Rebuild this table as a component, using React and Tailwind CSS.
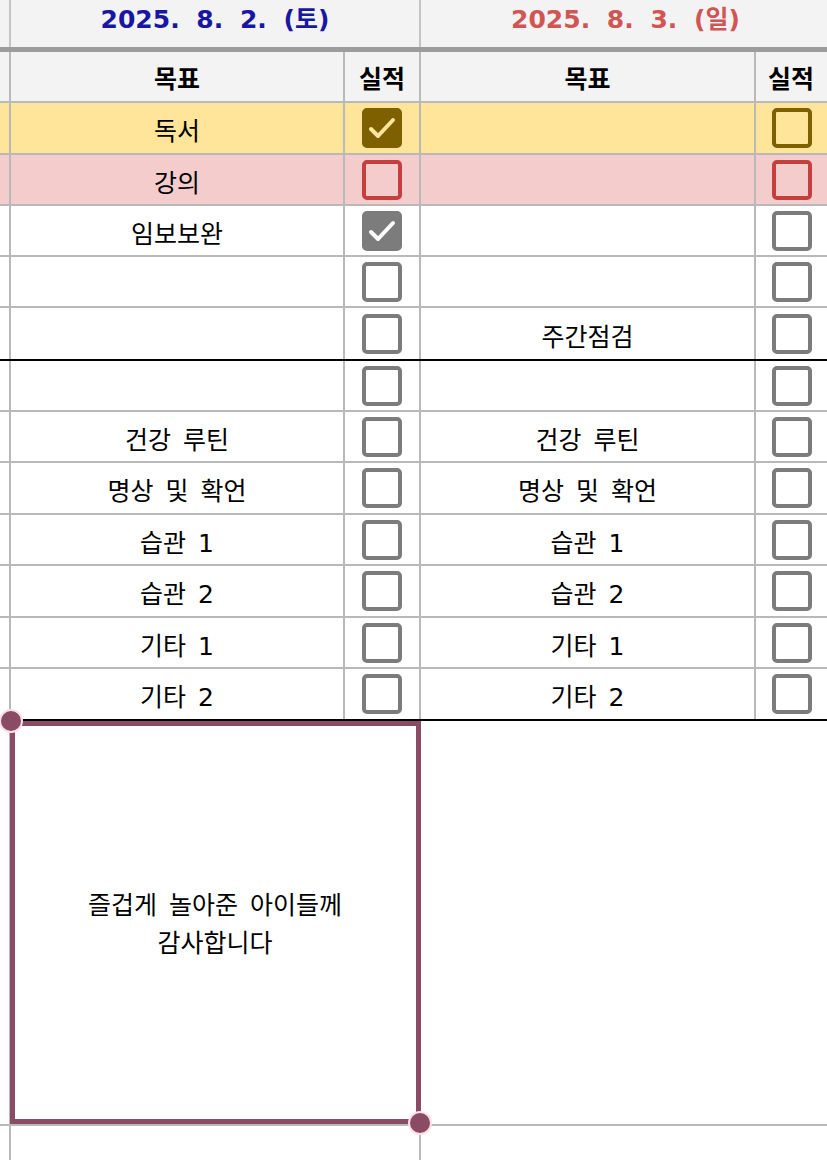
import React from 'react';

const FONT = { fontFamily: '"DejaVu Sans", "Noto Sans CJK KR", sans-serif' };

const day1 = ['독서', '강의', '임보보완', '', '', '', '건강 루틴', '명상 및 확언', '습관 1', '습관 2', '기타 1', '기타 2'];
const day2 = ['', '', '', '', '주간점검', '', '건강 루틴', '명상 및 확언', '습관 1', '습관 2', '기타 1', '기타 2'];
const done1 = [true, false, true, false, false, false, false, false, false, false, false, false];

// 행마다 높이, 배경, 아래 선
const rowStyles = [
  'h-[52px] bg-[#ffe599] border-[#b9b9b9]',
  'h-[51px] bg-[#f4cccc] border-[#b9b9b9]',
  'h-[51px] bg-white border-[#b9b9b9]',
  'h-[51px] bg-white border-[#b9b9b9]',
  'h-[53px] bg-white border-black',
  'h-[51px] bg-white border-[#b9b9b9]',
  'h-[51px] bg-white border-[#b9b9b9]',
  'h-[52px] bg-white border-[#b9b9b9]',
  'h-[51px] bg-white border-[#b9b9b9]',
  'h-[52px] bg-white border-[#b9b9b9]',
  'h-[51px] bg-white border-[#b9b9b9]',
  'h-[52px] bg-white border-black',
];

const Check = ({ checked, tone }) => {
  const tones = {
    yellow: checked ? 'border-[#7f6000] bg-[#7f6000]' : 'border-[#7f6000]',
    red: checked ? 'border-[#c43f3f] bg-[#c43f3f]' : 'border-[#c43f3f]',
    gray: checked ? 'border-[#7c7c7c] bg-[#7c7c7c]' : 'border-[#7c7c7c] bg-white',
  };
  const mark = tone === 'yellow' ? '#ffe599' : '#ffffff';
  return (
    <div className={`relative w-10 h-10 rounded-[5px] border-4 ${tones[tone]}`}>
      {checked && (
        <svg viewBox="0 0 40 40" className="absolute -left-1 -top-1 w-10 h-10">
          <polyline
            points="9,21 16,28 31,12"
            fill="none"
            stroke={mark}
            strokeWidth="4"
            strokeLinecap="round"
            strokeLinejoin="round"
          />
        </svg>
      )}
    </div>
  );
};

export default function App() {
  return (
    <div className="w-[827px] h-[1160px] overflow-hidden bg-white text-black" style={FONT}>
      <div className="w-[832px]">
        {/* 날짜 헤더 */}
        <div className="grid grid-cols-[11px_410px_411px] h-[52px] bg-[#f3f3f3] border-b-[5px] border-[#9c9c9c]">
          <div className="border-r-2 border-[#c4c4c4]" />
          <div className="border-r-2 border-[#c4c4c4] flex items-center justify-center pb-[8px] text-[25px] font-bold text-[#1717a3] [word-spacing:8px]">
            2025. 8. 2. (토)
          </div>
          <div className="flex items-center justify-center pb-[8px] pr-[2px] text-[25px] font-bold text-[#d15553] [word-spacing:8px]">
            2025. 8. 3. (일)
          </div>
        </div>

        {/* 목표 / 실적 */}
        <div className="grid grid-cols-[11px_334px_76px_335px_76px] h-[51px] bg-[#f3f3f3] border-b-2 border-[#b9b9b9]">
          <div className="border-r-2 border-[#b9b9b9]" />
          <div className="border-r-2 border-[#b9b9b9] flex items-center justify-center pt-[7px] text-[25px] font-bold">목표</div>
          <div className="border-r-2 border-[#b9b9b9] flex items-center justify-center pt-[7px] text-[25px] font-bold">실적</div>
          <div className="border-r-2 border-[#b9b9b9] flex items-center justify-center pt-[7px] text-[25px] font-bold">목표</div>
          <div className="flex items-center justify-start pl-[12px] pt-[7px] text-[25px] font-bold">실적</div>
        </div>

        {/* 목록 */}
        {day1.map((goal, i) => {
          const tone = i === 0 ? 'yellow' : i === 1 ? 'red' : 'gray';
          return (
            <div key={i} className={`grid grid-cols-[11px_334px_76px_335px_76px] border-b-2 ${rowStyles[i]}`}>
              <div className="border-r-2 border-[#b9b9b9]" />
              <div className="border-r-2 border-[#b9b9b9] flex items-center justify-center pt-[8px] text-[25px] [word-spacing:4px]">{goal}</div>
              <div className="border-r-2 border-[#b9b9b9] flex items-center justify-center">
                <Check checked={done1[i]} tone={tone} />
              </div>
              <div className="border-r-2 border-[#b9b9b9] flex items-center justify-center pt-[8px] text-[25px] [word-spacing:4px]">{day2[i]}</div>
              <div className="flex items-center pl-[16px]">
                <Check checked={false} tone={tone} />
              </div>
            </div>
          );
        })}

        {/* 메모 칸 */}
        <div className="relative grid grid-cols-[11px_410px_411px] h-[405px] border-b-2 border-[#b9b9b9]">
          <div className="border-r-2 border-[#b9b9b9]" />
          <div className="border-r-2 border-[#b9b9b9] flex items-center justify-center pt-[5px] text-center text-[25px] leading-[38px] [word-spacing:4px]">
            즐겁게 놀아준 아이들께
            <br />
            감사합니다
          </div>
          <div />
          <div className="absolute left-[10px] top-0 w-[411px] h-[403px] border-[5px] border-[#8a4b64]" />
          <div className="absolute left-[1px] -top-[10px] w-5 h-5 rounded-full bg-[#8a4b64] ring-2 ring-[#fbe0e8]" />
          <div className="absolute left-[410px] top-[392px] w-5 h-5 rounded-full bg-[#8a4b64] ring-2 ring-[#fbe0e8]" />
        </div>

        <div className="grid grid-cols-[11px_410px_411px] h-[40px]">
          <div className="border-r-2 border-[#b9b9b9]" />
          <div className="border-r-2 border-[#b9b9b9]" />
          <div />
        </div>
      </div>
    </div>
  );
}
